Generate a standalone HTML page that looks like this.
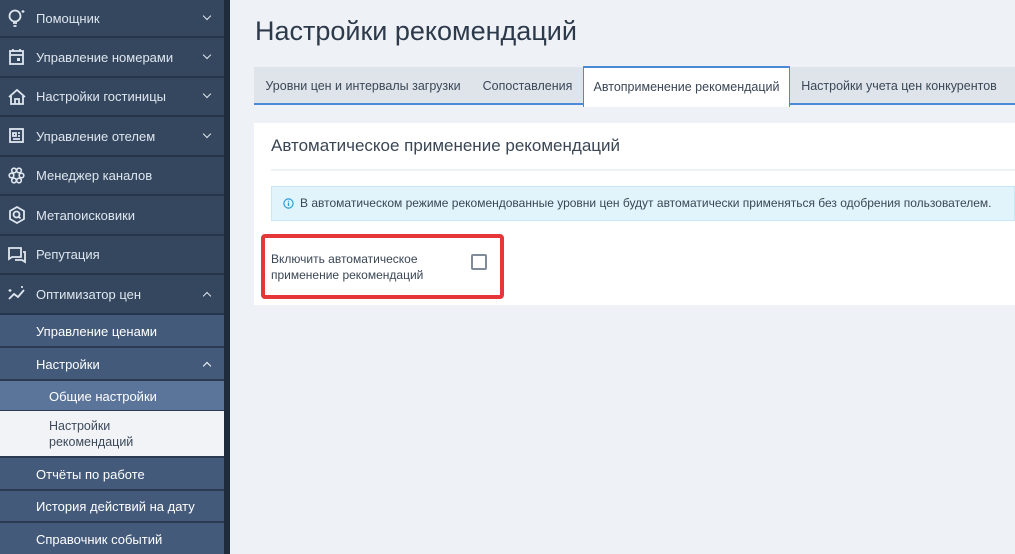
<!DOCTYPE html>
<html><head><meta charset="utf-8"><style>
*{box-sizing:border-box;margin:0;padding:0}
body{width:1015px;height:554px;overflow:hidden;background:#eef1f5;font-family:"Liberation Sans",sans-serif;position:relative}
#sb{position:absolute;left:0;top:0;width:224px;height:554px;background:#34475f}
#strip{position:absolute;left:224px;top:0;width:6px;height:554px;background:#1f2b3b}
.it{position:absolute;left:0;width:224px;color:#dfe6ef;font-size:13px;border-bottom:2px solid #26354a}
.it .ic{position:absolute;left:7px;width:20px;height:20px}
.it .tx{position:absolute;left:36px}
.it .ch{position:absolute;right:14px;width:6px;height:6px;border-right:1.6px solid #dfe6ef;border-bottom:1.6px solid #dfe6ef}
.sub{background:#435a7b;color:#fff;border-bottom:2px solid #2b3a50}
h1{position:absolute;left:255px;top:16px;font-size:27px;font-weight:normal;color:#2d3a4b}
#tabs{position:absolute;left:254px;top:67px;width:761px;height:38px;background:#dfe4eb;border-bottom:2px solid #4a8ad6}
.tab{position:absolute;top:0;height:38px;line-height:38px;font-size:12.5px;color:#3b4756;text-align:center}
#card{position:absolute;left:254px;top:123px;width:761px;height:182px;background:#fff}
</style></head><body>
<div id="sb">
<div class="it" style="top:0;height:38px"><svg class="ic" style="top:8px" viewBox="0 0 20 20" fill="none" stroke="#dfe6ef" stroke-width="1.8"><circle cx="8" cy="8" r="5.5"/><path d="M6 15h4M6.5 18h3"/><path d="M16 2v3M14.5 3.5h3" stroke-width="1.2"/></svg><span class="tx" style="top:11px">Помощник</span><span class="ch" style="top:13px;transform:rotate(45deg)"></span></div>
<div class="it" style="top:38px;height:40px"><svg class="ic" style="top:9px" viewBox="0 0 20 20" fill="none" stroke="#dfe6ef" stroke-width="1.8"><rect x="3" y="4" width="13" height="13"/><path d="M3 8h13M6 2v3M13 2v3"/><rect x="10" y="11" width="3" height="3" fill="#dfe6ef" stroke="none"/></svg><span class="tx" style="top:12px">Управление номерами</span><span class="ch" style="top:14px;transform:rotate(45deg)"></span></div>
<div class="it" style="top:78px;height:39px"><svg class="ic" style="top:9px" viewBox="0 0 20 20" fill="none" stroke="#dfe6ef" stroke-width="1.8"><path d="M2 10l8-7 8 7M4 9v8h12V9M8 17v-5h4v5"/></svg><span class="tx" style="top:11px">Настройки гостиницы</span><span class="ch" style="top:13px;transform:rotate(45deg)"></span></div>
<div class="it" style="top:117px;height:40px"><svg class="ic" style="top:9px" viewBox="0 0 20 20" fill="none" stroke="#dfe6ef" stroke-width="1.8"><rect x="3" y="3" width="13" height="13"/><path d="M6 7h3v3H6zM11 7h2M11 10h2M6 13h7"/></svg><span class="tx" style="top:12px">Управление отелем</span><span class="ch" style="top:14px;transform:rotate(45deg)"></span></div>
<div class="it" style="top:157px;height:39px"><svg class="ic" style="top:9px" viewBox="0 0 20 20" fill="none" stroke="#dfe6ef" stroke-width="1.6"><circle cx="7" cy="4.5" r="2.3"/><circle cx="12" cy="4.5" r="2.3"/><circle cx="4.5" cy="9.5" r="2.3"/><circle cx="14.5" cy="9.5" r="2.3"/><circle cx="7" cy="14.5" r="2.3"/><circle cx="12" cy="14.5" r="2.3"/></svg><span class="tx" style="top:11px">Менеджер каналов</span></div>
<div class="it" style="top:196px;height:40px"><svg class="ic" style="top:9px" viewBox="0 0 20 20" fill="none" stroke="#dfe6ef" stroke-width="1.8"><path d="M10 2l7 4v8l-7 4-7-4V6z"/><circle cx="9.5" cy="9.5" r="3"/><path d="M11.5 11.5l2 2"/></svg><span class="tx" style="top:12px">Метапоисковики</span></div>
<div class="it" style="top:236px;height:39px"><svg class="ic" style="top:9px" viewBox="0 0 20 20" fill="none" stroke="#dfe6ef" stroke-width="1.8"><path d="M2 3h12v9H5l-3 2z"/><path d="M16 7h2v10l-3-2H8"/></svg><span class="tx" style="top:11px">Репутация</span></div>
<div class="it" style="top:275px;height:40px"><svg class="ic" style="top:9px" viewBox="0 0 20 20" fill="none" stroke="#dfe6ef" stroke-width="1.8"><path d="M2 15l5-5 4 3 6-7"/><path d="M3 5v3M1.5 6.5h3M15 2v2M14 3h2" stroke-width="1.2"/></svg><span class="tx" style="top:12px">Оптимизатор цен</span><span class="ch" style="top:18px;transform:rotate(-135deg)"></span></div>
<div class="it sub" style="top:315px;height:33px"><span class="tx" style="top:9px">Управление ценами</span></div>
<div class="it sub" style="top:348px;height:33px"><span class="tx" style="top:9px">Настройки</span><span class="ch" style="top:15px;transform:rotate(-135deg);border-color:#fff"></span></div>
<div class="it" style="top:381px;height:30px;background:#5b7499;color:#fff;border-bottom:1px solid #2b3a50"><span class="tx" style="left:49px;top:8px">Общие настройки</span></div>
<div class="it" style="top:411px;height:47px;background:#f1f3f6;color:#3d4a5a;border:none;border-bottom:2px solid #2b3a50"><span class="tx" style="left:49px;top:7px;line-height:16px;font-size:12.5px">Настройки<br>рекомендаций</span></div>
<div class="it sub" style="top:458px;height:33px"><span class="tx" style="top:9px">Отчёты по работе</span></div>
<div class="it sub" style="top:491px;height:32px"><span class="tx" style="top:8px">История действий на дату</span></div>
<div class="it sub" style="top:523px;height:31px;border:none"><span class="tx" style="top:9px">Справочник событий</span></div>
</div>
<div id="strip"></div>
<h1>Настройки рекомендаций</h1>
<div id="tabs">
<div class="tab" style="left:0;width:218px">Уровни цен и интервалы загрузки</div>
<div class="tab" style="left:218px;width:111px">Сопоставления</div>
<div class="tab" style="left:329px;width:207px;top:-1px;height:41px;background:#fff;border:1px solid #4a8ad6;border-top:2px solid #4a8ad6;border-bottom:none">Автоприменение рекомендаций</div>
<div class="tab" style="left:536px;width:218px">Настройки учета цен конкурентов</div>
</div>
<div id="card">
<div style="position:absolute;left:17px;top:13px;font-size:17px;color:#3a4654">Автоматическое применение рекомендаций</div>
<div style="position:absolute;left:17px;top:46px;right:0;height:2px;background:#eef1f5"></div>
<div style="position:absolute;left:17px;top:63px;right:0;height:35px;background:#e2f4fb;border:1px solid #c7e8f4;font-size:12px;color:#3a4654;line-height:33px;padding-left:28px">В автоматическом режиме рекомендованные уровни цен будут автоматически применяться без одобрения пользователем.
<svg style="position:absolute;left:11px;top:11px" width="11" height="11" viewBox="0 0 11 11"><circle cx="5.5" cy="5.5" r="4.6" fill="none" stroke="#2a9bd8" stroke-width="1.2"/><path d="M5.5 4.6v3.4M5.5 2.8v.9" stroke="#2a9bd8" stroke-width="1.3"/></svg></div>
<div style="position:absolute;left:7px;top:111px;width:243px;height:65px;border:4px solid #e5373a;border-radius:4px"></div>
<div style="position:absolute;left:17px;top:128px;font-size:12px;color:#3a4654;line-height:16px">Включить автоматическое<br>применение рекомендаций</div>
<div style="position:absolute;left:217px;top:131px;width:16px;height:16px;border:2px solid #7f8b99;border-radius:2px"></div>
</div>
</body></html>
